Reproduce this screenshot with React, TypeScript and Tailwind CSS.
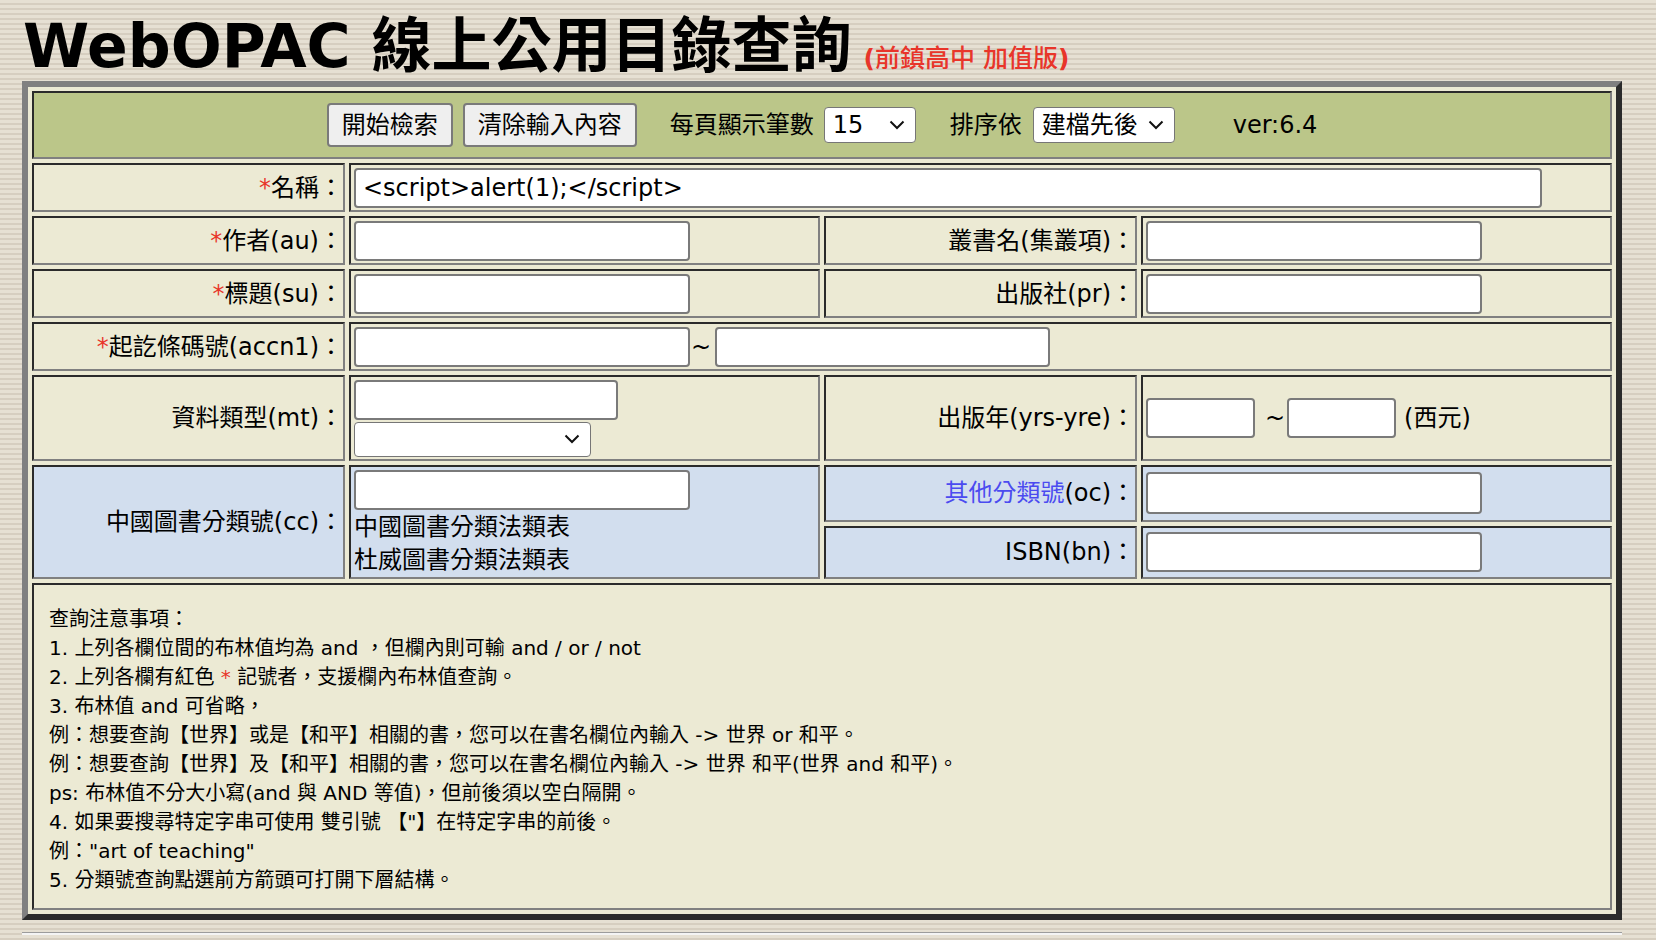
import React from "react";

const edge =
  "border-2 border-t-[#2b2b2b] border-l-[#2b2b2b] border-r-[#808080] border-b-[#808080]";
const cream = "bg-[#ecead4]";
const blue = "bg-[#d2deee]";

function Star() {
  return <span className="text-[#e8352a]">*</span>;
}

function Field({ className = "", value }: { className?: string; value?: string }) {
  return (
    <input
      readOnly
      defaultValue={value}
      className={`h-[40px] bg-white border-2 border-[#7a7a7a] rounded-[4px] pl-[7px] outline-none ${className}`}
    />
  );
}

function Chevron() {
  return (
    <svg width="16" height="10" viewBox="0 0 16 10">
      <path d="M1.5 1.5l6.5 6.5 6.5-6.5" fill="none" stroke="#111" strokeWidth="2" />
    </svg>
  );
}

function FakeSelect({ className = "", children }: { className?: string; children?: React.ReactNode }) {
  return (
    <div
      className={`bg-white border border-[#767676] rounded-[4px] flex items-center justify-between pl-[8px] pr-[10px] ${className}`}
    >
      <span>{children}</span>
      <Chevron />
    </div>
  );
}

function Label({ children, className = cream, rowSpan }: { children: React.ReactNode; className?: string; rowSpan?: number }) {
  return (
    <td rowSpan={rowSpan} className={`${edge} ${className} text-right align-middle pr-0`}>
      {children}
    </td>
  );
}

export default function App() {
  return (
    <div className="min-h-screen bg-[image:repeating-linear-gradient(to_bottom,#e6e0d3_0px,#e6e0d3_3px,#d6cec0_3px,#d6cec0_5px)] pl-[22px] font-['DejaVu_Sans','Noto_Sans_CJK_TC',sans-serif] text-black">
      <div className="h-[81px] pt-[16px] pl-[1px]">
        <h1 className="text-[60px] leading-[60px] font-bold whitespace-nowrap">
          WebOPAC 線上公用目錄查詢
          <span className="ml-[12px] text-[25px] leading-none font-medium text-[#e8352a]">
            <span className="font-bold">(</span>前鎮高中 加值版<span className="font-bold">)</span>
          </span>
        </h1>
      </div>

      <table className="table-fixed border-separate border-spacing-[4px] w-[1600px] bg-[#ecead4] border-[6px] border-t-[#808080] border-l-[#808080] border-r-[#2b2b2b] border-b-[#2b2b2b] text-[24px]">
        <colgroup>
          <col className="w-[313px]" />
          <col className="w-[471px]" />
          <col className="w-[313px]" />
          <col className="w-[471px]" />
        </colgroup>
        <tbody>
          <tr>
            <td colSpan={4} className={`${edge} bg-[#bbc689] h-[68px] align-middle`}>
              <div className="flex items-center justify-center whitespace-nowrap">
                <button className="h-[44px] px-[13px] bg-[#efefef] border-2 border-[#7a7a7a] rounded-[4px]">開始檢索</button>
                <button className="ml-[10px] h-[44px] px-[13px] bg-[#efefef] border-2 border-[#7a7a7a] rounded-[4px]">清除輸入內容</button>
                <span className="ml-[33px]">每頁顯示筆數</span>
                <FakeSelect className="ml-[10px] w-[92px] h-[36px]">15</FakeSelect>
                <span className="ml-[34px]">排序依</span>
                <FakeSelect className="ml-[11px] w-[142px] h-[36px]">建檔先後</FakeSelect>
                <span className="ml-[58px]">ver:6.4</span>
              </div>
            </td>
          </tr>

          <tr>
            <Label><Star />名稱：</Label>
            <td colSpan={3} className={`${edge} ${cream} h-[49px] pl-[3px] align-middle`}>
              <div className="flex items-center">
                <Field className="w-[1188px]" value="<script>alert(1);</script>" />
              </div>
            </td>
          </tr>

          <tr>
            <Label><Star />作者(au)：</Label>
            <td className={`${edge} ${cream} h-[49px] pl-[3px] align-middle`}>
              <div className="flex items-center"><Field className="w-[336px]" /></div>
            </td>
            <Label>叢書名(集叢項)：</Label>
            <td className={`${edge} ${cream} pl-[3px] align-middle`}>
              <div className="flex items-center"><Field className="w-[336px]" /></div>
            </td>
          </tr>

          <tr>
            <Label><Star />標題(su)：</Label>
            <td className={`${edge} ${cream} h-[49px] pl-[3px] align-middle`}>
              <div className="flex items-center"><Field className="w-[336px]" /></div>
            </td>
            <Label>出版社(pr)：</Label>
            <td className={`${edge} ${cream} pl-[3px] align-middle`}>
              <div className="flex items-center"><Field className="w-[336px]" /></div>
            </td>
          </tr>

          <tr>
            <Label><Star />起訖條碼號(accn1)：</Label>
            <td colSpan={3} className={`${edge} ${cream} h-[49px] pl-[3px] align-middle`}>
              <div className="flex items-center">
                <Field className="w-[336px]" />
                <span className="ml-[1px] mr-[4px]">~</span>
                <Field className="w-[335px]" />
              </div>
            </td>
          </tr>

          <tr>
            <Label>資料類型(mt)：</Label>
            <td className={`${edge} ${cream} h-[86px] pl-[3px] align-middle`}>
              <div className="flex flex-col gap-[2px]">
                <Field className="w-[264px] h-[39px]" />
                <FakeSelect className="w-[237px] h-[35px]" />
              </div>
            </td>
            <Label>出版年(yrs-yre)：</Label>
            <td className={`${edge} ${cream} pl-[3px] align-middle`}>
              <div className="flex items-center">
                <Field className="w-[109px]" />
                <span className="ml-[10px] mr-[2px]">~</span>
                <Field className="w-[109px]" />
                <span className="ml-[8px]">(西元)</span>
              </div>
            </td>
          </tr>

          <tr>
            <Label rowSpan={2} className={blue}>中國圖書分類號(cc)：</Label>
            <td rowSpan={2} className={`${edge} ${blue} pl-[3px] pt-[3px] align-top`}>
              <Field className="w-[336px]" />
              <div className="leading-[33px] mt-[1px]">中國圖書分類法類表</div>
              <div className="leading-[33px]">杜威圖書分類法類表</div>
            </td>
            <Label className={blue}>
              <span className="text-[#4b4bf0]">其他分類號</span>(oc)：
            </Label>
            <td className={`${edge} ${blue} h-[56px] pl-[3px] align-middle`}>
              <div className="flex items-center"><Field className="w-[336px] h-[42px]" /></div>
            </td>
          </tr>

          <tr>
            <Label className={blue}>ISBN(bn)：</Label>
            <td className={`${edge} ${blue} h-[53px] pl-[3px] align-middle`}>
              <div className="flex items-center"><Field className="w-[336px]" /></div>
            </td>
          </tr>

          <tr>
            <td colSpan={4} className={`${edge} ${cream} h-[327px] align-top pt-[20px] pl-[15px] text-[20px] leading-[29px]`}>
              <div>查詢注意事項：</div>
              <div>1. 上列各欄位間的布林值均為 and ，但欄內則可輸 and / or / not</div>
              <div>2. 上列各欄有紅色 <span className="text-[#e8352a]">*</span> 記號者，支援欄內布林值查詢。</div>
              <div>3. 布林值 and 可省略，</div>
              <div>例：想要查詢【世界】或是【和平】相關的書，您可以在書名欄位內輸入 -&gt; 世界 or 和平。</div>
              <div>例：想要查詢【世界】及【和平】相關的書，您可以在書名欄位內輸入 -&gt; 世界 和平(世界 and 和平)。</div>
              <div>ps: 布林值不分大小寫(and 與 AND 等值)，但前後須以空白隔開。</div>
              <div>4. 如果要搜尋特定字串可使用 雙引號 【"】在特定字串的前後。</div>
              <div>例："art of teaching"</div>
              <div>5. 分類號查詢點選前方箭頭可打開下層結構。</div>
            </td>
          </tr>
        </tbody>
      </table>

      <div className="mt-[12px] w-[1600px] h-[3px] border-t border-t-[#9c9c9c] bg-[#f4f4f4]" />
    </div>
  );
}
